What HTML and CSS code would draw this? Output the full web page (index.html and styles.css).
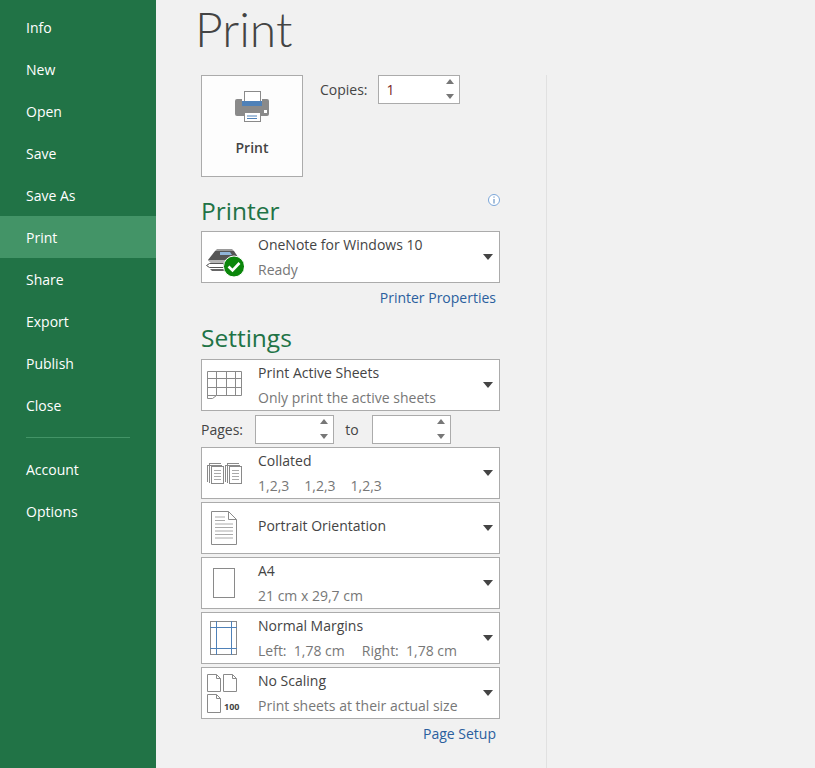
FILE: index.html
```html
<!DOCTYPE html>
<html lang="en">

<head>
    <meta charset="UTF-8">
    <title>Print</title>
    <link rel="stylesheet" href="styles.css">
</head>

<body>
    <nav class="sidebar">
        <a href="#">Info</a>
        <a href="#">New</a>
        <a href="#">Open</a>
        <a href="#">Save</a>
        <a href="#">Save As</a>
        <a href="#" class="current">Print</a>
        <a href="#">Share</a>
        <a href="#">Export</a>
        <a href="#">Publish</a>
        <a href="#">Close</a>
        <div class="sidebar-rule"></div>
        <a href="#">Account</a>
        <a href="#">Options</a>
    </nav>
    <main>
        <h1>Print</h1>
        <section class="pane">
            <div class="pane-inner">
                <div class="print-row">
                    <button class="print-btn">
                        <svg width="34" height="31" viewBox="0 0 34 31">
                            <rect x="9.5" y="0.5" width="16" height="11" fill="#fff" stroke="#8a8a8a"/>
                            <path d="M2 8h5v7h20V8h5a2 2 0 0 1 2 2v13a2 2 0 0 1-2 2H2a2 2 0 0 1-2-2V10a2 2 0 0 1 2-2z" fill="#8a8a8a"/>
                            <rect x="7" y="10" width="20" height="5" fill="#4f81b8"/>
                            <rect x="29" y="19" width="3" height="3" fill="#fff"/>
                            <rect x="9.5" y="21.5" width="16" height="9" fill="#fff" stroke="#8a8a8a"/>
                            <path d="M12 25h10M12 27.500h10" stroke="#4f81b8"/>
                        </svg>
                        <span>Print</span>
                    </button>
                    <label class="copies">Copies:</label>
                    <div class="spin spin-copies">
                        <span class="spin-val">1</span>
                        <span class="spin-arrows"><i class="up"></i><i class="down"></i></span>
                    </div>
                </div>

                <div class="heading-row heading-printer">
                    <h2>Printer</h2>
                    <svg class="info" width="12" height="12" viewBox="0 0 12 12">
                        <circle cx="6" cy="6" r="5.500" fill="#fff" stroke="#7ba6d8"/>
                        <path d="M6 5v4.500M6 2.500v1.200" stroke="#4f81b8"/>
                    </svg>
                </div>
                <div class="drop">
                    <div class="drop-icon">
                        <svg class="ic-printer" width="38" height="29" viewBox="0 0 38 29">
                            <path d="M2 12L9 3h19l4 6v8H8z" fill="#555"/>
                            <path d="M9 3l2-2h15l2 2z" fill="#9a9a9a"/>
                            <path d="M14 4h10l2 3H14z" fill="#8fb4d8"/>
                            <path d="M2 12h22v3H5z" fill="#b5b5b5"/>
                            <path d="M0.500 17.500l3-2h14l1 4h-15z" fill="#fff" stroke="#555"/>
                            <path d="M4 21h16v2H6z" fill="#666"/>
                            <circle cx="28" cy="18.500" r="10.500" fill="#0b860b" stroke="#fff"/>
                            <path d="M22.500 18.500l4 4 7-7.500" fill="none" stroke="#fff" stroke-width="2.600"/>
                        </svg>
                    </div>
                    <div class="drop-text">
                        <div>OneNote for Windows 10</div>
                        <div class="sub">Ready</div>
                    </div>
                    <i class="caret"></i>
                </div>
                <a href="#" class="link">Printer Properties</a>

                <h2 class="heading-settings">Settings</h2>
                <div class="drop">
                    <div class="drop-icon">
                        <svg width="35" height="28" viewBox="0 0 35 28" fill="none" stroke="#8a8a8a">
                            <path d="M0.500 0.500h34v24H9.500l-4 3h-5z"/>
                            <path d="M0.500 7.500h34M0.500 16.500h34M9.500 0.500v24M19.500 0.500v24M28.500 0.500v24M0.500 24.500h9"/>
                        </svg>
                    </div>
                    <div class="drop-text">
                        <div>Print Active Sheets</div>
                        <div class="sub">Only print the active sheets</div>
                    </div>
                    <i class="caret"></i>
                </div>

                <div class="pages-row">
                    <label class="pages-label">Pages:</label>
                    <div class="spin spin-pages"><span class="spin-val"></span><span class="spin-arrows"><i class="up"></i><i class="down"></i></span></div>
                    <label class="to-label">to</label>
                    <div class="spin spin-pages"><span class="spin-val"></span><span class="spin-arrows"><i class="up"></i><i class="down"></i></span></div>
                </div>

                <div class="drop">
                    <div class="drop-icon">
                        <svg width="35" height="21" viewBox="0 0 35 21" fill="none" stroke="#8a8a8a">
                            <path d="M0.500 2v17M2.500 1v19M2 0.500h12M1 2.500h14"/>
                            <rect x="4.500" y="3.500" width="12" height="17" fill="#fff"/>
                            <path d="M7 7.500h7M7 10.500h7M7 13.500h7M7 16.500h7" stroke="#aaa"/>
                            <path d="M18.500 2v17M20.500 1v19M20 0.500h12M19 2.500h14"/>
                            <rect x="22.500" y="3.500" width="12" height="17" fill="#fff"/>
                            <path d="M25 7.500h7M25 10.500h7M25 13.500h7M25 16.500h7" stroke="#aaa"/>
                        </svg>
                    </div>
                    <div class="drop-text">
                        <div>Collated</div>
                        <div class="sub collate"><span>1,2,3</span><span>1,2,3</span><span>1,2,3</span></div>
                    </div>
                    <i class="caret"></i>
                </div>

                <div class="drop">
                    <div class="drop-icon">
                        <svg class="ic-portrait" width="26" height="34" viewBox="0 0 26 34" fill="none" stroke="#8a8a8a">
                            <path d="M0.500 0.500h17l8 8v25h-25z"/>
                            <path d="M17.500 0.500v8h8"/>
                            <path d="M4 6h10M4 9.500h10M4 13h18M4 16.500h18M4 20h18M4 23.500h18M4 27h18" stroke="#aaa"/>
                        </svg>
                    </div>
                    <div class="drop-text single">
                        <div>Portrait Orientation</div>
                    </div>
                    <i class="caret"></i>
                </div>

                <div class="drop">
                    <div class="drop-icon">
                        <svg class="ic-a4" width="22" height="30" viewBox="0 0 22 30" fill="none" stroke="#8a8a8a">
                            <rect x="0.500" y="0.500" width="21" height="29"/>
                        </svg>
                    </div>
                    <div class="drop-text">
                        <div>A4</div>
                        <div class="sub">21 cm x 29,7 cm</div>
                    </div>
                    <i class="caret"></i>
                </div>

                <div class="drop">
                    <div class="drop-icon">
                        <svg class="ic-margins" width="27" height="34" viewBox="0 0 27 34" fill="none">
                            <rect x="0.500" y="0.500" width="26" height="33" stroke="#8a8a8a"/>
                            <path d="M6.500 0v34M21.500 0v34M0 6.500h27M0 27.500h27" stroke="#4f81b8"/>
                        </svg>
                    </div>
                    <div class="drop-text">
                        <div>Normal Margins</div>
                        <div class="sub collate-margins"><span>Left:&nbsp; 1,78 cm</span><span>Right:&nbsp; 1,78 cm</span></div>
                    </div>
                    <i class="caret"></i>
                </div>

                <div class="drop">
                    <div class="drop-icon">
                        <svg width="34" height="39" viewBox="0 0 34 39" fill="none" stroke="#8a8a8a">
                            <path d="M0.500 0.500h9l4 4v13h-13zM9.500 0.500v4h4"/>
                            <path d="M16.500 0.500h9l4 4v13h-13zM25.500 0.500v4h4"/>
                            <path d="M0.500 20.500h9l4 4v14h-13zM9.500 20.500v4h4"/>
                            <text x="17" y="36" class="scale-num">100</text>
                        </svg>
                    </div>
                    <div class="drop-text">
                        <div>No Scaling</div>
                        <div class="sub">Print sheets at their actual size</div>
                    </div>
                    <i class="caret"></i>
                </div>
                <a href="#" class="link">Page Setup</a>
            </div>
        </section>
    </main>
</body></html>
```

FILE: styles.css
```css
* {
    box-sizing: border-box;
    padding: 0;
    margin: 0;
}

html,
body {
    height: 100%;
}

body {
    display: flex;
    overflow: hidden;
    font-family: "Open Sans", "Liberation Sans", sans-serif;
    font-size: 14px;
    color: #444;
    background: #f1f1f1;
}

a {
    text-decoration: none;
}

.sidebar {
    flex: 0 0 156px;
    padding-top: 6px;
    background: #217346;
}

.sidebar a {
    display: block;
    height: 42px;
    padding-left: 26px;
    line-height: 44px;
    color: #fff;
}

.sidebar a.current {
    background: #439467;
}

.sidebar-rule {
    height: 1px;
    margin: 11px 26px 10px;
    background: #439467;
}

main {
    flex: 1;
    display: flex;
    flex-direction: column;
    padding-left: 41px;
}

h1 {
    height: 75px;
    margin-left: -2px;
    font-family: Lato, sans-serif;
    font-size: 48px;
    font-weight: 300;
    line-height: 58px;
    color: #444;
}

.pane {
    flex: 1;
    width: 350px;
    padding-left: 4px;
    border-right: 1px solid #e1e1e1;
}

.pane-inner {
    width: 299px;
}

.print-row {
    display: flex;
    align-items: flex-start;
    height: 102px;
}

.print-btn {
    display: flex;
    flex-direction: column;
    align-items: center;
    width: 102px;
    height: 102px;
    padding-top: 15px;
    border: 1px solid #ababab;
    background: #fdfdfd;
    font: 600 14px "Open Sans", sans-serif;
    color: #444;
}

.print-btn span {
    margin-top: 16px;
}

.copies {
    margin: 5px 10px 0 17px;
}

.spin {
    display: flex;
    justify-content: space-between;
    height: 29px;
    border: 1px solid #ababab;
    background: #fff;
}

.spin-copies {
    width: 82px;
}

.spin-pages {
    width: 79px;
}

.spin-val {
    padding-left: 8px;
    line-height: 27px;
    color: #7a1f1f;
}

.spin-arrows {
    display: flex;
    flex-direction: column;
    justify-content: space-between;
    padding: 3px 5px 4px 0;
}

.spin-arrows i {
    display: block;
    border-left: 4px solid transparent;
    border-right: 4px solid transparent;
}

.spin-arrows .up {
    border-bottom: 5px solid #777;
}

.spin-arrows .down {
    border-top: 5px solid #777;
}

.heading-row {
    display: flex;
    justify-content: space-between;
}

h2 {
    font-size: 24.500px;
    font-weight: 400;
    line-height: 34px;
    color: #217346;
}

.heading-printer {
    height: 54px;
    padding-top: 17px;
}

.heading-settings {
    height: 38px;
    margin-top: 9px;
}

.drop {
    display: flex;
    height: 52px;
    margin-bottom: 3px;
    border: 1px solid #ababab;
    background: #fff;
}

.drop-icon {
    flex: 0 0 56px;
    display: flex;
    align-items: center;
    padding-left: 5px;
}

.ic-printer {
    margin: 10px 0 0 -1px;
}

.ic-portrait {
    margin-left: 4px;
}

.ic-a4 {
    margin-left: 6px;
}

.ic-margins {
    margin-left: 3px;
}

.drop-text {
    flex: 1;
    line-height: 25px;
}

.drop-text.single {
    padding-top: 10px;
}

.sub {
    color: #777;
}

.collate {
    display: flex;
    gap: 15px;
}

.collate-margins {
    display: flex;
    gap: 17px;
}

.caret {
    align-self: center;
    margin-right: 6px;
    border-top: 6px solid #444;
    border-left: 5px solid transparent;
    border-right: 5px solid transparent;
}

.link {
    display: block;
    height: 28px;
    margin-top: -2px;
    padding-right: 4px;
    text-align: right;
    line-height: 28px;
    color: #2b5f9e;
}

.pages-row {
    display: flex;
    align-items: center;
    height: 33px;
    margin: -1px 0 1px;
}

.pages-label {
    width: 54px;
}

.to-label {
    width: 38px;
    padding-right: 2px;
    text-align: center;
}

.scale-num {
    font-family: "Open Sans", sans-serif;
    font-size: 9px;
    font-weight: 700;
    fill: #444;
    stroke: none;
}
```
